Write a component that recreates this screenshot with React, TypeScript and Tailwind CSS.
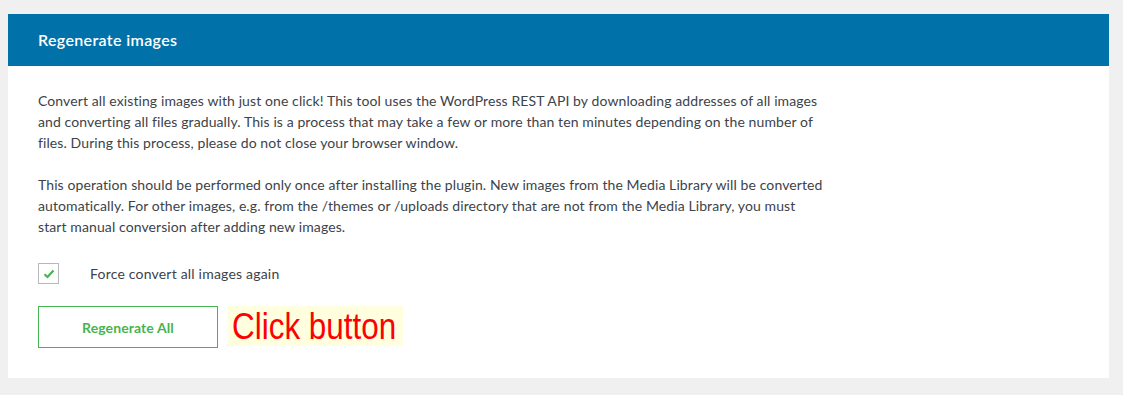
import React from "react";

export default function App() {
  return (
    <div className="w-[1123px] h-[395px] bg-[#f0f0f0] pt-[14px] pl-[8px]" style={{ fontFamily: "Lato, 'Noto Sans', sans-serif" }}>
      <div className="w-[1101px] h-[364px] bg-white">
        <div className="h-[52px] bg-[#0072a9] flex items-center pl-[30px]">
          <span className="text-white text-[16px] font-semibold tracking-[0.35px]">Regenerate images</span>
        </div>
        <div className="pl-[30px] pt-[24px] text-[#3c434a] text-[14px] leading-[21px] tracking-[0.1px]">
          <p>
            Convert all existing images with just one click! This tool uses the WordPress REST API by downloading addresses of all images
            <br />
            and converting all files gradually. This is a process that may take a few or more than ten minutes depending on the number of
            <br />
            files. During this process, please do not close your browser window.
          </p>
          <p className="mt-[21px]">
            This operation should be performed only once after installing the plugin. New images from the Media Library will be converted
            <br />
            automatically. For other images, e.g. from the /themes or /uploads directory that are not from the Media Library, you must
            <br />
            start manual conversion after adding new images.
          </p>
          <div className="mt-[26px] flex items-center">
            <div className="w-[21px] h-[21px] border border-[#b4b9be] flex items-center justify-center">
              <svg width="12" height="10" viewBox="0 0 12 10">
                <path d="M1.5 5.2 L4.5 8 L10.5 1.5" fill="none" stroke="#46b450" strokeWidth="2.2" />
              </svg>
            </div>
            <span className="ml-[31px] tracking-[0.2px]">Force convert all images again</span>
          </div>
          <div className="mt-[22px] flex items-start">
            <button className="w-[180px] h-[42px] border border-[#46b450] text-[#46b450] text-[14px] font-bold bg-white">
              Regenerate All
            </button>
            <div className="ml-[10px] h-[40px] bg-[#ffffe0] flex items-center px-[4px]">
              <span
                className="inline-block text-[#ff0000] text-[37px] origin-left scale-x-[0.85] w-[167px] whitespace-nowrap tracking-normal"
                style={{ fontFamily: "'Liberation Sans', sans-serif" }}
              >
                Click button
              </span>
            </div>
          </div>
        </div>
      </div>
    </div>
  );
}
